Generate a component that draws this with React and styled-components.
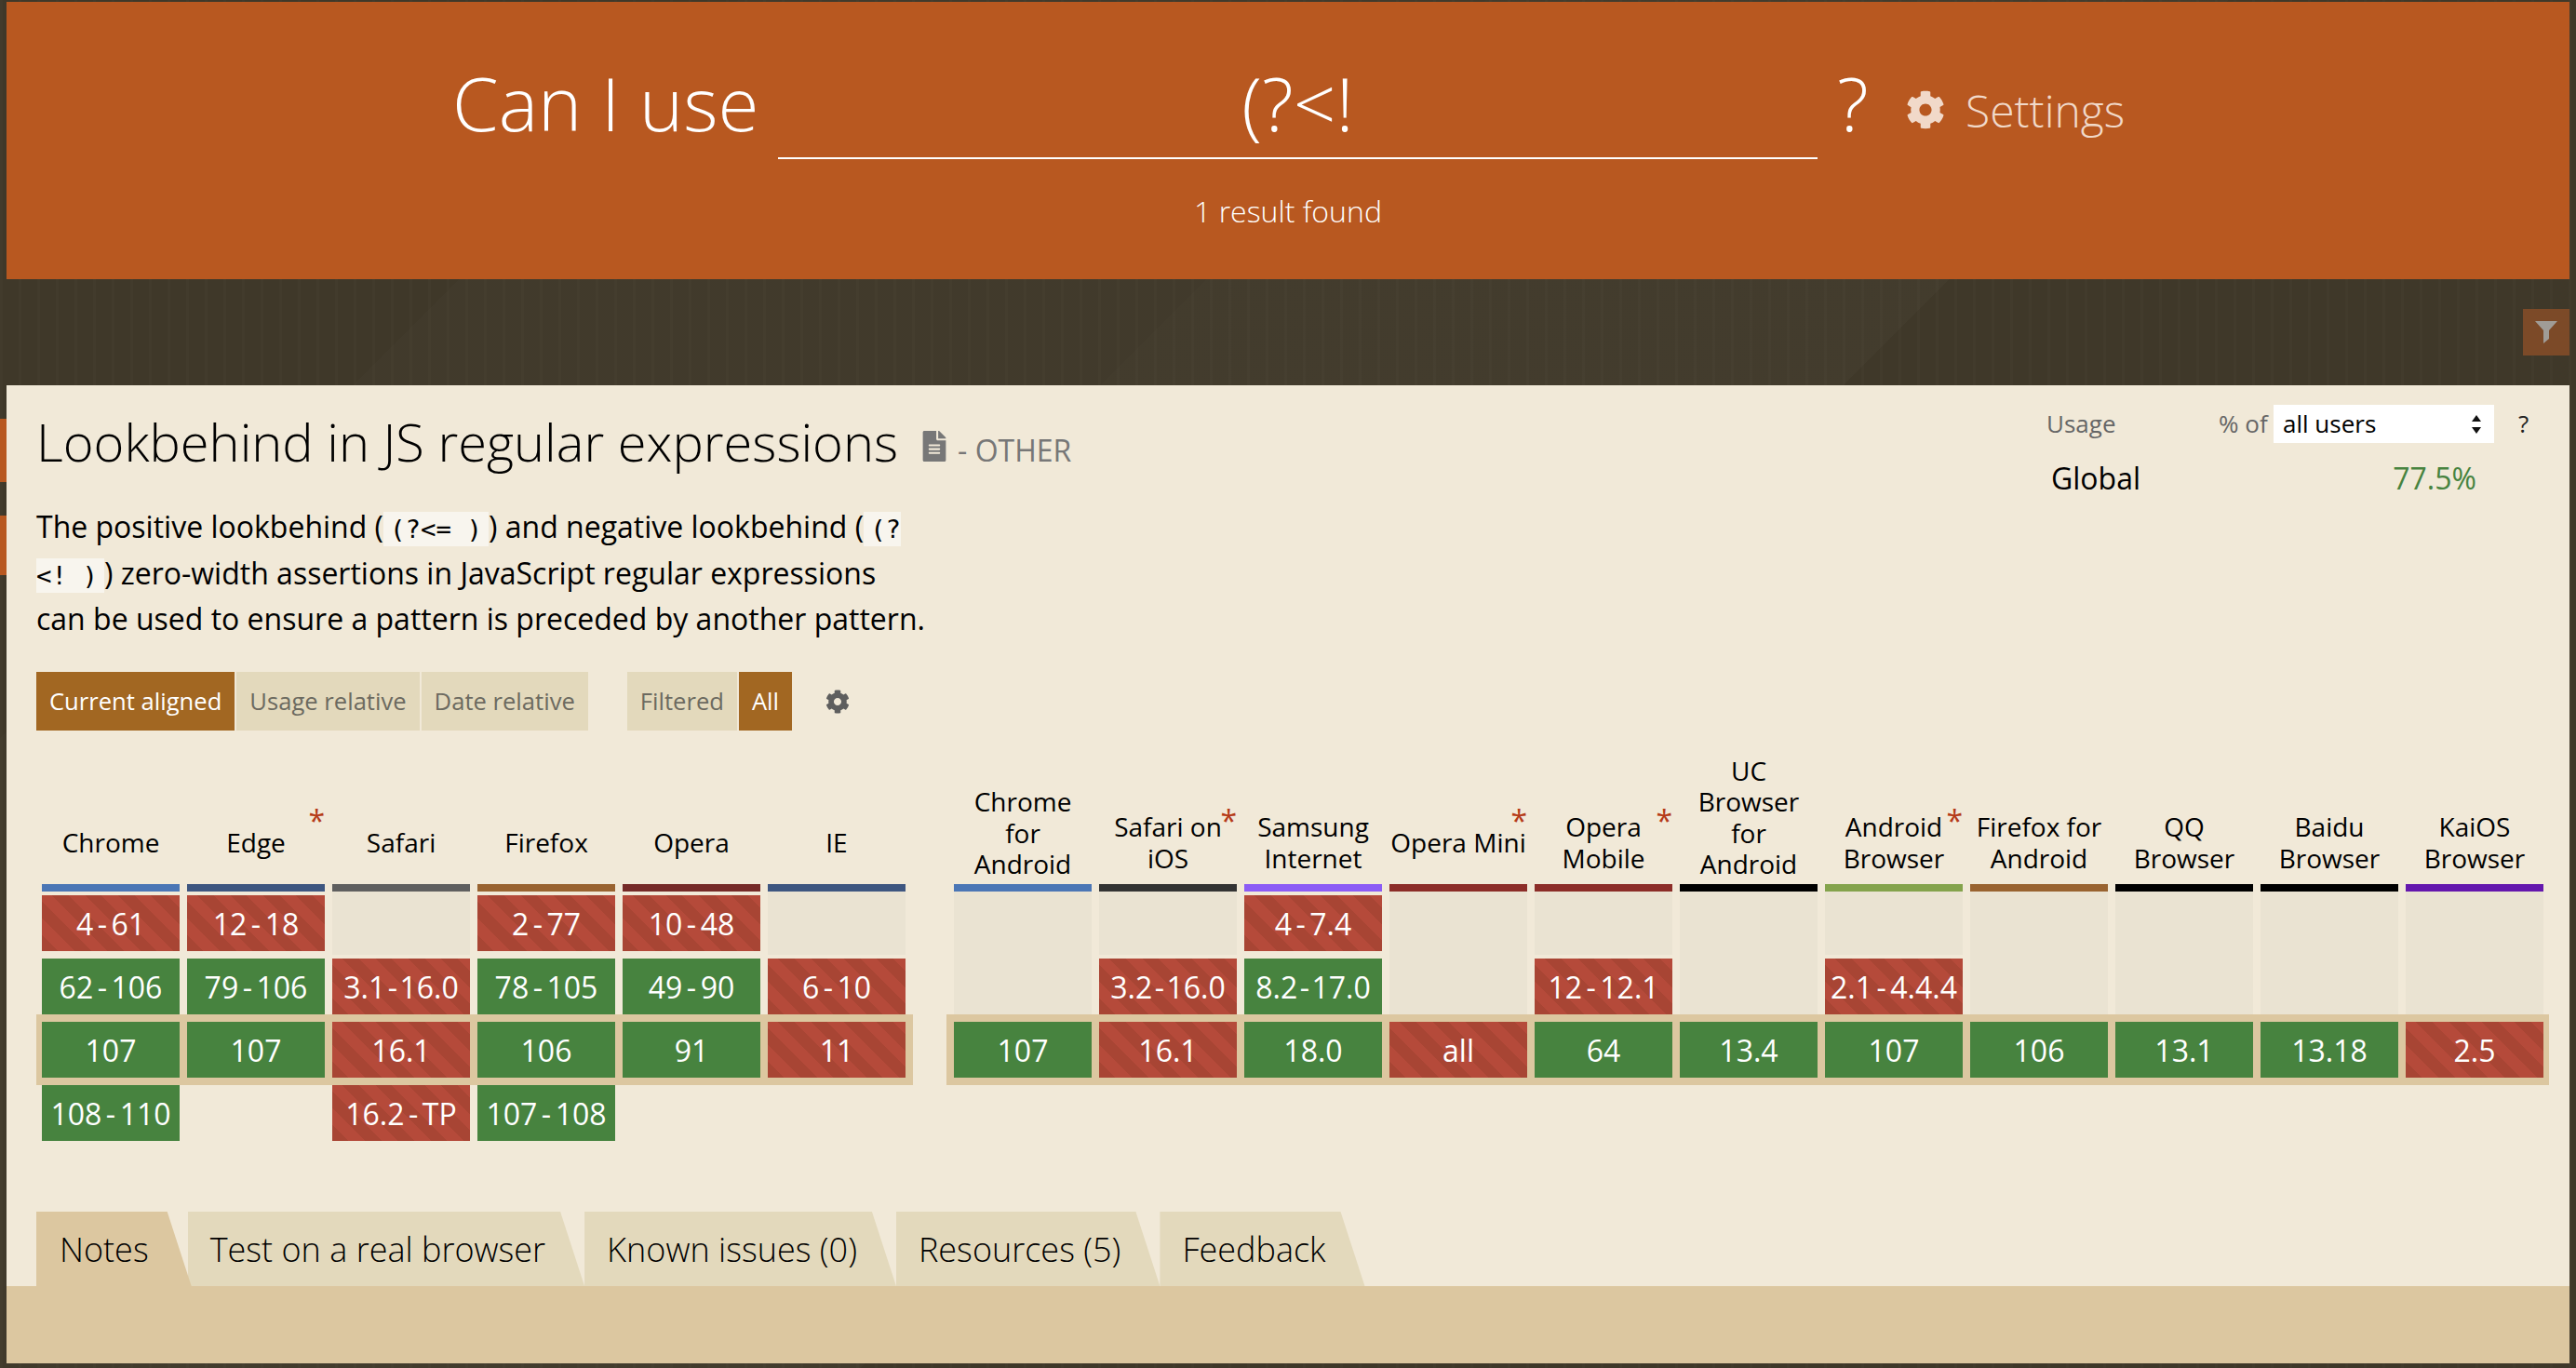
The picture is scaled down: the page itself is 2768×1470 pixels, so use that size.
import React from 'react'
import styled, { createGlobalStyle } from 'styled-components'
import { FaCog, FaFileAlt } from 'react-icons/fa'

const GlobalStyle = createGlobalStyle`
  html, body {
    margin: 0;
    padding: 0;
    height: 100%;
  }
  body {
    font-family: "Open Sans", "Liberation Sans", sans-serif;
    color: #000;
    background-color: #3f3829;
    background-image:
      linear-gradient(135deg, transparent 0 561px, rgba(255,255,255,.01) 561px 1129px, rgba(255,255,255,.018) 1129px 1693px, transparent 1693px),
      repeating-linear-gradient(90deg, rgba(255,255,255,.016) 0 3px, transparent 3px 20px);
  }
  * { box-sizing: border-box; }
`

const Page = styled.div`
  position: relative;
  width: 2768px;
  height: 1470px;
  padding: 2px 7px 5px;
  display: flex;
  flex-direction: column;
  overflow: hidden;
`

const SideMark = styled.div`
  position: absolute;
  left: 0;
  top: ${p => p.$top}px;
  width: 7px;
  height: ${p => p.$height}px;
  background: #b85820;
`

const Header = styled.header`
  height: 298px;
  background: #b85820;
  color: #fff;
  padding-top: 58px;
  flex: none;
`

const SearchRow = styled.div`
  display: flex;
  align-items: flex-start;
  padding-left: 479px;
  height: 111px;
`

const Logo = styled.h1`
  margin: 0;
  font-size: 80px;
  font-weight: 300;
  line-height: 100px;
  width: 350px;
  flex: none;
  white-space: nowrap;
`

const SearchInput = styled.input`
  display: block;
  width: 1117px;
  height: 111px;
  flex: none;
  border: 0;
  border-bottom: 2px solid #fff;
  background: transparent;
  color: #fff;
  font-family: inherit;
  font-size: 80px;
  font-weight: 300;
  text-align: center;
  padding: 0 0 10px;
  outline: 0;
`

const QuestionMark = styled.span`
  font-size: 80px;
  font-weight: 300;
  line-height: 100px;
  margin-left: 21px;
  width: 74px;
  flex: none;
`

const SettingsLink = styled.a`
  display: flex;
  align-items: center;
  gap: 22px;
  height: 116px;
  font-size: 48px;
  font-weight: 300;
  color: #f1d9c9;
  white-space: nowrap;
  svg {
    width: 42px;
    height: 48px;
  }
`

const ResultCount = styled.div`
  text-align: center;
  font-size: 32px;
  font-weight: 300;
  line-height: 44px;
  margin-top: 34px;
`

const FilterBand = styled.div`
  height: 114px;
  flex: none;
  display: flex;
  justify-content: flex-end;
  padding-top: 32px;
`

const FilterButton = styled.button`
  width: 50px;
  height: 50px;
  border: 0;
  padding: 0;
  background: #7c4a28;
  display: flex;
  align-items: center;
  justify-content: center;
`

const Panel = styled.main`
  flex: 1;
  min-height: 0;
  background: #f1e9d8;
  display: flex;
  flex-direction: column;
`

const Body = styled.div`
  padding: 0 32px;
  flex: 1;
`

const Intro = styled.div`
  display: flex;
  justify-content: space-between;
  height: 308px;
`

const IntroText = styled.div`
  width: 980px;
  flex: none;
`

const Title = styled.h2`
  margin: 0;
  padding: 4px 0 0;
  height: 116px;
  display: flex;
  align-items: center;
  white-space: nowrap;
  font-size: 56px;
  font-weight: 300;
`

const Category = styled.span`
  display: flex;
  align-items: center;
  margin-left: 26px;
  padding-top: 18px;
  font-size: 32px;
  font-weight: 400;
  color: #777;
  svg {
    width: 26px;
    height: 33px;
    margin: -8px 12px 0 0;
  }
`

const Description = styled.p`
  margin: 0;
  padding-top: 11px;
  font-size: 32px;
  line-height: 49.6px;
`

const Code = styled.code`
  font-family: "DejaVu Sans Mono", monospace;
  font-size: 27.4px;
  line-height: 1;
  background: #f8f5ee;
  padding: 3px 7px;
  white-space: pre;
`

const UsagePanel = styled.aside`
  width: 530px;
  flex: none;
  padding-top: 21px;
`

const UsageTop = styled.div`
  display: flex;
  align-items: center;
  height: 41px;
  font-size: 26px;
  color: #666;
`

const UsageLabel = styled.span`
  width: 185px;
  flex: none;
  padding-bottom: 2px;
`

const UsageOf = styled.span`
  width: 59px;
  flex: none;
  padding-bottom: 2px;
`

const SelectWrap = styled.div`
  position: relative;
  width: 237px;
  height: 41px;
  flex: none;
  svg {
    position: absolute;
    right: 12px;
    top: 10px;
    pointer-events: none;
  }
`

const UsageSelect = styled.select`
  appearance: none;
  width: 100%;
  height: 100%;
  border: 0;
  border-radius: 0;
  padding: 0 10px 2px;
  background: #fff;
  color: #000;
  font-family: inherit;
  font-size: 26px;
`

const UsageHelp = styled.span`
  margin-left: 26px;
  padding-bottom: 2px;
  color: #222;
`

const UsageRow = styled.div`
  display: flex;
  justify-content: space-between;
  margin-top: 16px;
  padding: 0 68px 0 5px;
  font-size: 32px;
  line-height: 44px;
`

const UsageValue = styled.span`
  color: #47833f;
`

const ControlRow = styled.div`
  display: flex;
  align-items: center;
  height: 63px;
`

const ModeButton = styled.button`
  height: 63px;
  border: 0;
  padding: 0 14px;
  margin-right: 2px;
  background: ${p => (p.$active ? '#a26722' : '#e3d9bc')};
  color: ${p => (p.$active ? '#fff' : '#6c6a60')};
  font-family: inherit;
  font-size: 25.6px;
  white-space: nowrap;
`

const ControlGap = styled.div`
  width: 40px;
`

const GearButton = styled.span`
  color: #5e5e5e;
  margin-left: 34px;
  display: flex;
  svg {
    width: 26px;
    height: 26px;
  }
`

const Tables = styled.div`
  display: flex;
  margin-top: 26px;
`

const TableGroup = styled.div`
  margin-left: ${p => p.$left}px;
`

const Row = styled.div`
  display: grid;
  grid-template-columns: repeat(${p => p.$count}, 148px);
  column-gap: 8px;
`

const HeaderRow = styled(Row)`
  height: 135px;
  align-items: end;
  margin-bottom: 4px;
`

const BrowserName = styled.div`
  position: relative;
  min-height: 80px;
  display: flex;
  align-items: center;
  justify-content: center;
  text-align: center;
  font-size: 28px;
  line-height: 33.6px;
`

const Asterisk = styled.span`
  position: absolute;
  right: 0;
  top: 8px;
  color: #b53a17;
  font-size: 32px;
  line-height: 16px;
`

const BarRow = styled(Row)`
  height: 8px;
`

const Bar = styled.div`
  background: ${p => p.$color};
`

const OlderRow = styled(Row)`
  height: ${p => p.$height}px;
`

const CurrentRow = styled(Row)`
  background: #dcc7a0;
  height: 76px;
  padding: 8px ${p => p.$right}px 8px ${p => p.$left}px;
  margin: 0 -${p => p.$right}px 0 -${p => p.$left}px;
  width: calc(100% + ${p => p.$left + p.$right}px);
`

const FutureRow = styled(Row)`
  height: 60px;
`

const EmptyCell = styled.div`
  background: ${p => (p.$clear ? 'transparent' : '#eae3d2')};
`

const Cell = styled.div`
  height: 60px;
  margin-top: ${p => p.$top}px;
  display: flex;
  align-items: center;
  justify-content: center;
  color: #fff;
  font-size: 32px;
  white-space: nowrap;
  background-color: ${p => (p.$ok ? '#47833f' : '#b54a3a')};
  background-image: ${p => (p.$ok ? 'none' : 'repeating-linear-gradient(45deg, #a84534 0 12.5px, #b54a3a 12.5px 25px)')};
`

const Dash = styled.span`
  margin: 0 ${p => (p.$tight ? 2.5 : 4.5)}px;
`

const Tabs = styled.nav`
  display: flex;
  height: 80px;
  padding: 0 0 2px 32px;
  flex: none;
`

const Tab = styled.a`
  position: relative;
  z-index: ${p => (p.$active ? 1 : 0)};
  height: 80px;
  display: flex;
  align-items: center;
  padding: 0 ${p => (p.$active ? 46 : 42)}px 0 ${p => (p.$active ? 25 : 24)}px;
  margin-right: ${p => (p.$active ? -4 : 0)}px;
  font-size: 36px;
  font-weight: 300;
  white-space: nowrap;
  background: ${p => (p.$active ? '#dcc7a0' : '#e3d9bc')};
  clip-path: polygon(0 0, calc(100% - 26px) 0, 100% 100%, 0 100%);
`

const TabContent = styled.div`
  height: 83px;
  flex: none;
  background: #dcc7a0;
`

const Y = true
const N = false

const desktop = [
  { name: 'Chrome', color: '#4b76b5', older: ['4-61', N], prev: ['62-106', Y], cur: ['107', Y], next: ['108-110', Y] },
  { name: 'Edge', star: true, color: '#3e5680', older: ['12-18', N], prev: ['79-106', Y], cur: ['107', Y] },
  { name: 'Safari', color: '#5f5f5f', prev: ['3.1-16.0', N], cur: ['16.1', N], next: ['16.2-TP', N] },
  { name: 'Firefox', color: '#996330', older: ['2-77', N], prev: ['78-105', Y], cur: ['106', Y], next: ['107-108', Y] },
  { name: 'Opera', color: '#752a27', older: ['10-48', N], prev: ['49-90', Y], cur: ['91', Y] },
  { name: 'IE', color: '#3e5680', prev: ['6-10', N], cur: ['11', N] },
]

const mobile = [
  { name: 'Chrome for Android', color: '#4b76b5', cur: ['107', Y] },
  { name: 'Safari on iOS', star: true, color: '#333333', prev: ['3.2-16.0', N], cur: ['16.1', N] },
  { name: 'Samsung Internet', color: '#8c5cf5', older: ['4-7.4', N], prev: ['8.2-17.0', Y], cur: ['18.0', Y] },
  { name: 'Opera Mini', star: true, color: '#8c2d28', cur: ['all', N] },
  { name: 'Opera Mobile', star: true, color: '#8c2d28', prev: ['12-12.1', N], cur: ['64', Y] },
  { name: 'UC Browser for Android', color: '#000', cur: ['13.4', Y] },
  { name: 'Android Browser', star: true, color: '#84a34c', prev: ['2.1-4.4.4', N], cur: ['107', Y] },
  { name: 'Firefox for Android', color: '#996330', cur: ['106', Y] },
  { name: 'QQ Browser', color: '#000', cur: ['13.1', Y] },
  { name: 'Baidu Browser', color: '#000', cur: ['13.18', Y] },
  { name: 'KaiOS Browser', color: '#6417ad', cur: ['2.5', N] },
]

// version ranges get a gap round the dash, the long ones only a small one
const Version = ({ text }) => {
  const [from, to] = text.split('-')
  if (!to) return text
  return <>{from}<Dash $tight={text.length >= 8 && !text.startsWith('2.1')}>-</Dash>{to}</>
}

const BrowserTable = ({ browsers, left, bandLeft, bandRight }) => (
  <TableGroup $left={left}>
    <HeaderRow $count={browsers.length}>
      {browsers.map(b => (
        <BrowserName key={b.name}>
          {b.name}
          {b.star && <Asterisk>*</Asterisk>}
        </BrowserName>
      ))}
    </HeaderRow>
    <BarRow $count={browsers.length}>
      {browsers.map(b => <Bar key={b.name} $color={b.color} />)}
    </BarRow>
    <OlderRow $count={browsers.length} $height={68}>
      {browsers.map(b => (b.older
        ? <Cell key={b.name} $ok={b.older[1]} $top={4}><Version text={b.older[0]} /></Cell>
        : <EmptyCell key={b.name} />))}
    </OlderRow>
    <OlderRow $count={browsers.length} $height={64}>
      {browsers.map(b => (b.prev
        ? <Cell key={b.name} $ok={b.prev[1]} $top={4}><Version text={b.prev[0]} /></Cell>
        : <EmptyCell key={b.name} />))}
    </OlderRow>
    <CurrentRow $count={browsers.length} $left={bandLeft} $right={bandRight}>
      {browsers.map(b => <Cell key={b.name} $ok={b.cur[1]}>{b.cur[0]}</Cell>)}
    </CurrentRow>
    <FutureRow $count={browsers.length}>
      {browsers.map(b => (b.next
        ? <Cell key={b.name} $ok={b.next[1]}><Version text={b.next[0]} /></Cell>
        : <EmptyCell key={b.name} $clear />))}
    </FutureRow>
  </TableGroup>
)

const App = () => {
  return (
    <Page>
      <GlobalStyle />
      <SideMark $top={450} $height={68} />
      <SideMark $top={554} $height={64} />
      <Header>
        <SearchRow>
          <Logo>Can I use</Logo>
          <SearchInput readOnly value="(?<!" />
          <QuestionMark>?</QuestionMark>
          <SettingsLink><FaCog />Settings</SettingsLink>
        </SearchRow>
        <ResultCount>1 result found</ResultCount>
      </Header>
      <FilterBand>
        <FilterButton>
          <svg width="24" height="24" viewBox="0 0 24 24">
            <path d="M0 0H24L15 10V19L9 24V10Z" fill="#a09c96" />
          </svg>
        </FilterButton>
      </FilterBand>
      <Panel>
        <Body>
          <Intro>
            <IntroText>
              <Title>
                Lookbehind in JS regular expressions
                <Category><FaFileAlt />- OTHER</Category>
              </Title>
              <Description>
                The positive lookbehind (<Code>(?&lt;= )</Code>) and negative lookbehind (<Code>(?<br />&lt;! )</Code>) zero-width assertions in JavaScript regular expressions<br />
                can be used to ensure a pattern is preceded by another pattern.
              </Description>
            </IntroText>
            <UsagePanel>
              <UsageTop>
                <UsageLabel>Usage</UsageLabel>
                <UsageOf>% of</UsageOf>
                <SelectWrap>
                  <UsageSelect defaultValue="all">
                    <option value="all">all users</option>
                  </UsageSelect>
                  <svg width="14" height="22" viewBox="0 0 14 22">
                    <path d="M7 1l5 7H2zM7 21l-5-7h10z" fill="#111" />
                  </svg>
                </SelectWrap>
                <UsageHelp>?</UsageHelp>
              </UsageTop>
              <UsageRow>
                <span>Global</span>
                <UsageValue>77.5%</UsageValue>
              </UsageRow>
            </UsagePanel>
          </Intro>
          <ControlRow>
            <ModeButton $active>Current aligned</ModeButton>
            <ModeButton>Usage relative</ModeButton>
            <ModeButton>Date relative</ModeButton>
            <ControlGap />
            <ModeButton>Filtered</ModeButton>
            <ModeButton $active>All</ModeButton>
            <GearButton><FaCog /></GearButton>
          </ControlRow>
          <Tables>
            <BrowserTable browsers={desktop} left={6} bandLeft={6} bandRight={8} />
            <BrowserTable browsers={mobile} left={52} bandLeft={8} bandRight={6} />
          </Tables>
        </Body>
        <Tabs>
          <Tab $active>Notes</Tab>
          <Tab>Test on a real browser</Tab>
          <Tab>Known issues (0)</Tab>
          <Tab>Resources (5)</Tab>
          <Tab>Feedback</Tab>
        </Tabs>
        <TabContent />
      </Panel>
    </Page>
  )
}

export default App
